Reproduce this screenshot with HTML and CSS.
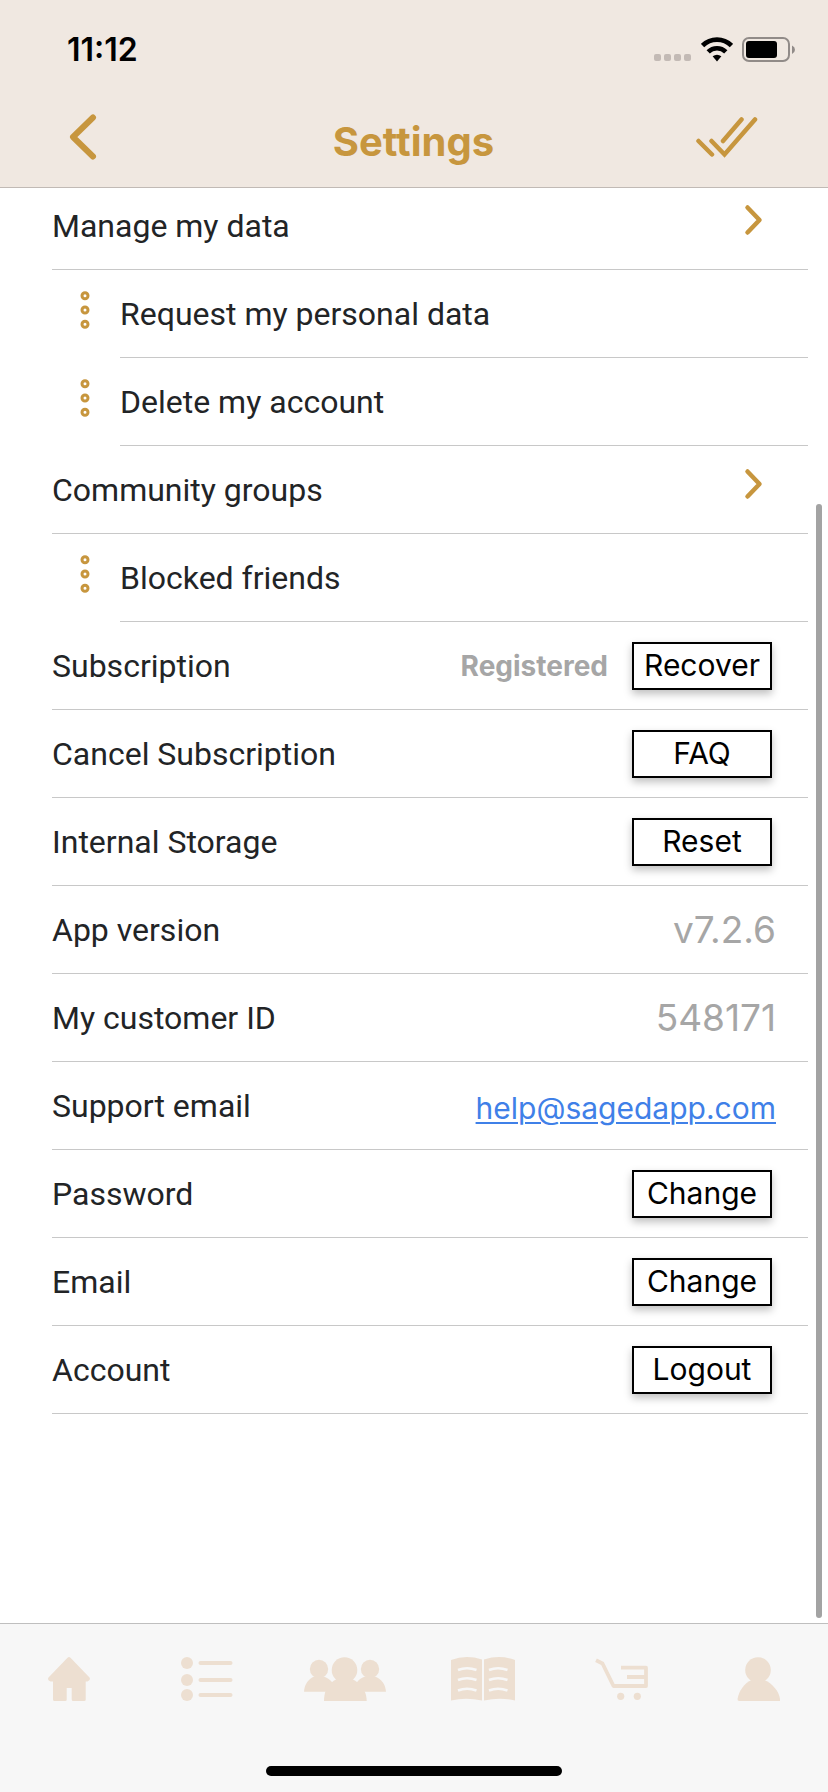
FILE: index.html
```html
<!DOCTYPE html>
<html lang="en">
<head>
<meta charset="utf-8">
<meta name="viewport" content="width=device-width, initial-scale=1">
<title>Settings</title>
<link rel="stylesheet" href="styles.css">
</head>
<body>
<svg class="sprite" aria-hidden="true">
  <symbol id="chevron" viewBox="0 0 20 32"><path d="M3.500 3.500L15.500 16L3.500 28.500" fill="none" stroke="currentColor" stroke-width="4.500" stroke-linecap="round" stroke-linejoin="round"/></symbol>
  <symbol id="dots" viewBox="0 0 10 40"><g fill="none" stroke="currentColor" stroke-width="3"><circle cx="5" cy="5.700" r="3"/><circle cx="5" cy="20" r="3"/><circle cx="5" cy="34.300" r="3"/></g></symbol>
</svg>
<header class="header">
  <div class="status">
    <span class="time">11:12</span>
    <div class="status-icons">
      <svg width="38" height="26" viewBox="0 0 38 26" fill="#c3bab5"><rect x="0" y="17" width="7" height="7" rx="2"/><rect x="10" y="17" width="7" height="7" rx="2"/><rect x="20" y="17" width="7" height="7" rx="2"/><rect x="30" y="17" width="7" height="7" rx="2"/></svg>
      <svg width="32" height="26" viewBox="0 0 32 26"><g fill="none" stroke="#000" stroke-width="4.600"><path d="M1.600 8.500A20.500 20.500 0 0 1 30.400 8.500"/><path d="M7.200 14.800A12.500 12.500 0 0 1 24.800 14.800"/></g><path d="M11.600 19.300Q16 16 20.400 19.300L16 24.500Z"/></svg>
      <svg width="54" height="26" viewBox="0 0 54 26"><rect x="1" y="1" width="46" height="23" rx="6" fill="none" stroke="#918b88" stroke-width="2"/><rect x="4" y="4" width="31" height="17" rx="3"/><path d="M50 8.500Q53 10 53 12.800T50 17Z" fill="#918b88"/></svg>
    </div>
  </div>
  <div class="navbar">
    <button class="icon-button" aria-label="Back"><svg width="28" height="46" viewBox="0 0 28 46"><path d="M24 3.500L4 23L24 42.500" fill="none" stroke="currentColor" stroke-width="6" stroke-linecap="round" stroke-linejoin="round"/></svg></button>
    <h1 class="title">Settings</h1>
    <button class="icon-button" aria-label="Save"><svg width="62" height="42" viewBox="0 0 62 42"><path d="M2.500 25L16 38.500M15.500 25L28.500 38.500L59 3.500M27 25L45.500 3.500" fill="none" stroke="currentColor" stroke-width="4.500" stroke-linecap="round"/></svg></button>
  </div>
</header>
<main class="content">
  <ul class="list">
    <li class="row"><span class="label">Manage my data</span><svg class="chevron"><use href="#chevron"/></svg></li>
    <li class="sub"><svg class="dots"><use href="#dots"/></svg><div class="row"><span class="label">Request my personal data</span></div></li>
    <li class="sub"><svg class="dots"><use href="#dots"/></svg><div class="row"><span class="label">Delete my account</span></div></li>
    <li class="row"><span class="label">Community groups</span><svg class="chevron"><use href="#chevron"/></svg></li>
    <li class="sub"><svg class="dots"><use href="#dots"/></svg><div class="row"><span class="label">Blocked friends</span></div></li>
    <li class="row"><span class="label">Subscription</span><span class="state">Registered</span><button class="action">Recover</button></li>
    <li class="row"><span class="label">Cancel Subscription</span><button class="action">FAQ</button></li>
    <li class="row"><span class="label">Internal Storage</span><button class="action">Reset</button></li>
    <li class="row"><span class="label">App version</span><span class="value">v7.2.6</span></li>
    <li class="row"><span class="label">My customer ID</span><span class="value">548171</span></li>
    <li class="row"><span class="label">Support email</span><a class="link" href="mailto:help@sagedapp.com">help@sagedapp.com</a></li>
    <li class="row"><span class="label">Password</span><button class="action">Change</button></li>
    <li class="row"><span class="label">Email</span><button class="action">Change</button></li>
    <li class="row"><span class="label">Account</span><button class="action">Logout</button></li>
  </ul>
  <div class="scrollbar"></div>
</main>
<footer class="footer">
  <nav class="tabs">
    <a href="#home" aria-label="Home"><svg width="42" height="44" viewBox="0 0 42 44"><path d="M19.500.700Q21-.500 22.500.700L41.500 20.500Q42.500 22 41 23.500L39.500 24.500H37.700V42.500Q37.700 44 36.200 44H25.200Q23.700 44 23.700 42.500V31H18.700V42.500Q18.700 44 17.200 44H6.500Q5 44 5 42.500V24.500H2.500L.700 23.500Q-.500 22 .500 20.500Z"/></svg></a>
    <a href="#list" aria-label="List"><svg width="52" height="44" viewBox="0 0 52 44"><circle cx="6" cy="6" r="6"/><circle cx="6" cy="23" r="6"/><circle cx="6" cy="38" r="6"/><path d="M19.500 6H49.500M19.500 23H49.500M19.500 38H49.500" fill="none" stroke="currentColor" stroke-width="4" stroke-linecap="round"/></svg></a>
    <a href="#community" aria-label="Community"><svg width="82" height="44" viewBox="0 0 82 44"><circle cx="40.500" cy="13" r="12.800"/><circle cx="15" cy="12" r="9.200"/><circle cx="66" cy="12" r="9.200"/><path d="M20 44C20 37 22 32 24 29C26 26 29 24 33 22H48C52 24 55 26 57.500 29C60.500 33 62.500 37 62.700 44Z"/><path d="M0 34.700C.500 27 5 21.500 10 19.500H20C24 21 28 24 29 27L22 34.700ZM82 34.700C81.500 27 77 21.500 71 19.500H61C57 21 54 23 52 27L60 34.700Z"/></svg></a>
    <a href="#library" aria-label="Library"><svg width="64" height="44" viewBox="0 0 64 44"><path d="M0 3Q15-2.500 31 2.500V43.500Q15 40 0 43.500ZM33 2.500Q49-2.500 64 3V43.500Q49 40 33 43.500Z"/><path d="M7 13Q16 9.500 25.500 13M7 23Q16 19.500 25.500 23M7 33.500Q16 30 25.500 33.500M38 13Q47 9.500 56.500 13M38 23Q47 19.500 56.500 23M38 33.500Q47 30 56.500 33.500" fill="none" stroke="#f7f7f7" stroke-width="2.500"/></svg></a>
    <a href="#shop" aria-label="Shop"><svg width="54" height="44" viewBox="0 0 54 44"><path d="M2 3.300L8.500 6.500L19.500 29H52V10.700H27M33 20H52" fill="none" stroke="currentColor" stroke-width="3.800" stroke-linejoin="round"/><circle cx="26.700" cy="39.300" r="3.600"/><circle cx="43.300" cy="39.300" r="3.600"/></svg></a>
    <a href="#profile" aria-label="Profile"><svg width="44" height="44" viewBox="0 0 44 44"><circle cx="21" cy="13" r="12.800"/><path d="M2 44Q.500 44 .500 42C2 34 7 26 15 23H27C35 26 42 34 43 42V44Z"/></svg></a>
  </nav>
  <div class="home-indicator"></div>
</footer>
</body>
</html>
```

FILE: styles.css
```css
* { box-sizing: border-box; }
body {
  margin: 0;
  min-height: 100vh;
  display: flex;
  flex-direction: column;
  background: #fff;
  color: #000;
  font-family: Inter, "Liberation Sans", sans-serif;
}
svg { display: block; flex: none; }
button { font: inherit; cursor: pointer; }
.sprite { position: absolute; width: 0; height: 0; }

.header {
  position: relative;
  z-index: 1;
  background: #f0e8e1;
  border-bottom: 1px solid #c1bab5;
}
.status {
  display: flex;
  justify-content: space-between;
  align-items: center;
  height: 88px;
  padding: 12px 32px 0 67px;
}
.time { font-size: 32px; font-weight: 600; line-height: 40px; }
.status-icons { display: flex; gap: 9px; }
.navbar {
  display: grid;
  grid-template-columns: 1fr auto 1fr;
  align-items: center;
  height: 99px;
  padding: 0 70px 2px 69px;
  color: #c7963e;
}
.icon-button { padding: 0; border: 0; background: none; color: inherit; justify-self: start; }
.icon-button:last-child { justify-self: end; }
.title { margin: 0; padding-top: 10px; font-size: 40px; font-weight: 700; line-height: 48px; }

.content { position: relative; flex: 1; }
.list { list-style: none; margin: -6px 20px 0 52px; padding: 0; }
.row {
  display: flex;
  flex: 1;
  align-items: center;
  height: 88px;
  padding-right: 32px;
  border-bottom: 1px solid #c8c8c8;
}
.sub { display: flex; }
.label { flex: 1; color: #222426; font-family: Roboto, sans-serif; font-size: 32px; line-height: 40px; }
.chevron { width: 20px; height: 32px; margin: 0 12px 12px 0; color: #c7963e; }
.dots { width: 10px; height: 40px; margin: 20px 30px 0 28px; color: #c7963e; }
.state { margin-right: 24px; color: #a6a6a6; font-size: 28px; font-weight: 700; }
.value { color: #a6a6a6; font-size: 37px; }
.link { padding-top: 4px; color: #3f80e8; font-size: 30px; text-decoration-thickness: 2px; text-underline-offset: 3px; }
.action {
  width: 140px;
  height: 48px;
  margin-right: 4px;
  padding: 0 0 2px;
  border: 2px solid #000;
  background: #fff;
  color: #000;
  font-size: 30px;
  line-height: 40px;
  box-shadow: 0 4px 8px rgba(0, 0, 0, 0.25);
}
.scrollbar {
  position: absolute;
  top: 22%;
  right: 6px;
  bottom: 5px;
  width: 6px;
  border-radius: 3px;
  background: #a3a3a3;
}

.footer {
  display: flex;
  flex-direction: column;
  align-items: center;
  justify-content: space-between;
  height: 169px;
  padding: 33px 0 16px;
  background: #f7f7f7;
  border-top: 1px solid #bfbfbf;
}
.tabs { display: grid; grid-template-columns: repeat(6, 1fr); width: 100%; }
.tabs a { display: flex; justify-content: center; color: #eddfd1; }
.tabs svg { fill: currentColor; }
.home-indicator { width: 296px; height: 10px; border-radius: 5px; background: #000; }
```
